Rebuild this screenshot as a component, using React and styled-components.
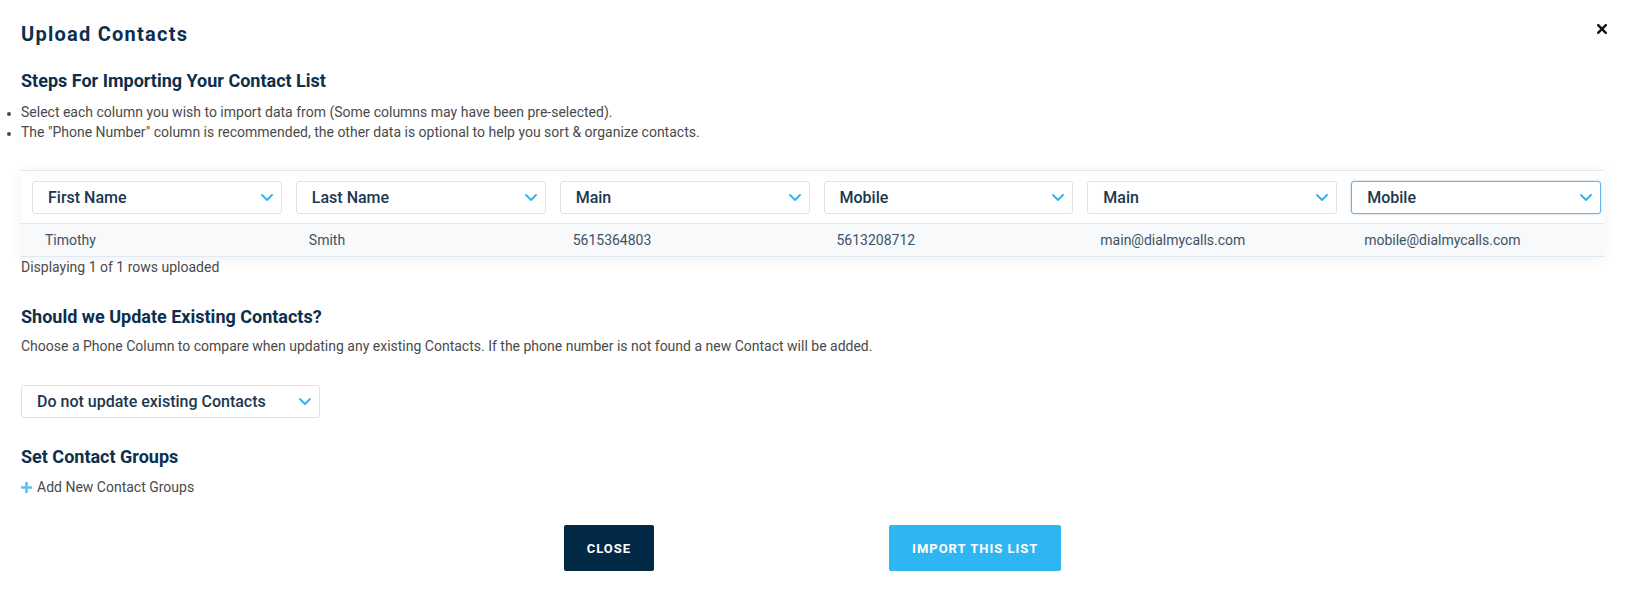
import styled, { createGlobalStyle } from 'styled-components';

const GlobalStyle = createGlobalStyle`
  body {
    margin: 0;
    background: #ffffff;
    font-family: Roboto, "Liberation Sans", Arial, sans-serif;
  }
`;

const columns = [
  { field: 'First Name', value: 'Timothy' },
  { field: 'Last Name', value: 'Smith' },
  { field: 'Main', value: '5615364803' },
  { field: 'Mobile', value: '5613208712' },
  { field: 'Main', value: 'main@dialmycalls.com' },
  { field: 'Mobile', value: 'mobile@dialmycalls.com', focused: true },
];

function Chevron() {
  return (
    <svg width="12" height="7" viewBox="0 0 12 7" fill="none">
      <polyline
        points="1,1 6,6 11,1"
        stroke="#2fb3ef"
        strokeWidth="1.8"
        strokeLinecap="round"
        strokeLinejoin="round"
      />
    </svg>
  );
}

function Select({ label, focused, width }) {
  return (
    <SelectBox $focused={focused} $width={width}>
      <span>{label}</span>
      <Chevron />
    </SelectBox>
  );
}

export default function App() {
  return (
    <>
      <GlobalStyle />
      <Modal>
        <CloseIcon aria-label="close">
          <svg width="10" height="10" viewBox="0 0 10 10">
            <path
              d="M1.2 1.2 L8.8 8.8 M8.8 1.2 L1.2 8.8"
              stroke="#111"
              strokeWidth="2.4"
              strokeLinecap="square"
            />
          </svg>
        </CloseIcon>

        <Title>Upload Contacts</Title>

        <Heading $top={24}>Steps For Importing Your Contact List</Heading>
        <Steps>
          <li>
            Select each column you wish to import data from (Some columns may
            have been pre-selected).
          </li>
          <li>
            The "Phone Number" column is recommended, the other data is optional
            to help you sort &amp; organize contacts.
          </li>
        </Steps>

        <Table>
          <HeaderRow>
            {columns.map((col, i) => (
              <HeaderCell key={i}>
                <Select label={col.field} focused={col.focused} />
              </HeaderCell>
            ))}
          </HeaderRow>
          <DataRow>
            {columns.map((col, i) => (
              <DataCell key={i}>{col.value}</DataCell>
            ))}
          </DataRow>
        </Table>
        <Note>Displaying 1 of 1 rows uploaded</Note>

        <Heading $top={29}>Should we Update Existing Contacts?</Heading>
        <Text $top={8}>
          Choose a Phone Column to compare when updating any existing Contacts.
          If the phone number is not found a new Contact will be added.
        </Text>
        <UpdateWrap>
          <Select label="Do not update existing Contacts" width="299px" />
        </UpdateWrap>

        <Heading $top={28}>Set Contact Groups</Heading>
        <AddLink>
          <svg width="11" height="11" viewBox="0 0 11 11">
            <path d="M5.5 0 V11 M0 5.5 H11" stroke="#5bc2ef" strokeWidth="2.6" />
          </svg>
          Add New Contact Groups
        </AddLink>

        <Footer>
          <Button $variant="dark">Close</Button>
          <Button $variant="blue">Import This List</Button>
        </Footer>
      </Modal>
    </>
  );
}

const Modal = styled.div`
  position: relative;
  padding: 22px 21px 21px 21px;
  color: #4a4a4a;
`;

const CloseIcon = styled.div`
  position: absolute;
  top: 24px;
  right: 18px;
  width: 10px;
  height: 10px;
  display: flex;
  cursor: pointer;
`;

const Title = styled.h1`
  margin: 0;
  font-size: 20px;
  line-height: 24px;
  font-weight: 700;
  letter-spacing: 1.25px;
  color: #0c2f4e;
`;

const Heading = styled.h2`
  margin: ${(p) => p.$top}px 0 0;
  font-size: 18px;
  line-height: 22px;
  font-weight: 700;
  color: #0c2f4e;
`;

const Steps = styled.ul`
  margin: 10px 0 0;
  padding: 0;
  font-size: 14px;
  line-height: 20px;
  color: #4a4a4a;
  list-style: disc outside;

  li::marker {
    font-size: 12px;
  }
`;

const Text = styled.p`
  margin: ${(p) => p.$top}px 0 0;
  font-size: 14px;
  line-height: 20px;
  color: #4a4a4a;
`;

const Table = styled.div`
  margin-top: 28px;
  border-top: 1px solid #dfe8f0;
  border-bottom: 1px solid #dfe8f0;
  box-shadow: 0 2px 12px rgba(20, 50, 80, 0.07);
`;

const HeaderRow = styled.div`
  display: grid;
  grid-template-columns: repeat(6, 1fr);
  background: #ffffff;
  border-bottom: 1px solid #dfe8f0;
`;

const HeaderCell = styled.div`
  padding: 10px 3px 9px 11px;
`;

const DataRow = styled.div`
  display: grid;
  grid-template-columns: repeat(6, 1fr);
  background: #f7f9fb;
  height: 32px;
  align-items: center;
`;

const DataCell = styled.div`
  padding-left: 24px;
  font-size: 14px;
  color: #3d5266;
`;

const SelectBox = styled.div`
  box-sizing: border-box;
  height: 33px;
  width: ${(p) => p.$width || '100%'};
  display: flex;
  align-items: center;
  justify-content: space-between;
  padding: 0 8px 0 15px;
  background: #ffffff;
  border: 1px solid ${(p) => (p.$focused ? '#62b2ee' : '#dae3ec')};
  border-radius: 3px;
  box-shadow: ${(p) =>
    p.$focused ? '0 0 3px rgba(98, 178, 238, 0.45)' : 'none'};
  font-size: 16px;
  font-weight: 500;
  color: #1b3750;
  cursor: pointer;
`;

const Note = styled.div`
  margin-top: 0;
  font-size: 14px;
  line-height: 20px;
  color: #4a4a4a;
`;

const UpdateWrap = styled.div`
  margin-top: 29px;
`;

const AddLink = styled.div`
  margin-top: 9px;
  display: flex;
  align-items: center;
  gap: 5px;
  font-size: 14px;
  line-height: 20px;
  color: #4a4a4a;
  cursor: pointer;
  svg {
    flex-shrink: 0;
  }
`;

const Footer = styled.div`
  margin-top: 28px;
  display: flex;
  justify-content: center;
  gap: 235px;
`;

const Button = styled.button`
  height: 46px;
  padding: 0 23px;
  border: none;
  border-radius: 2px;
  font-family: Roboto, "Liberation Sans", Arial, sans-serif;
  font-size: 13px;
  font-weight: 700;
  letter-spacing: 1px;
  text-transform: uppercase;
  color: #ffffff;
  background: ${(p) => (p.$variant === 'dark' ? '#022a47' : '#2db6f2')};
  cursor: pointer;
`;
